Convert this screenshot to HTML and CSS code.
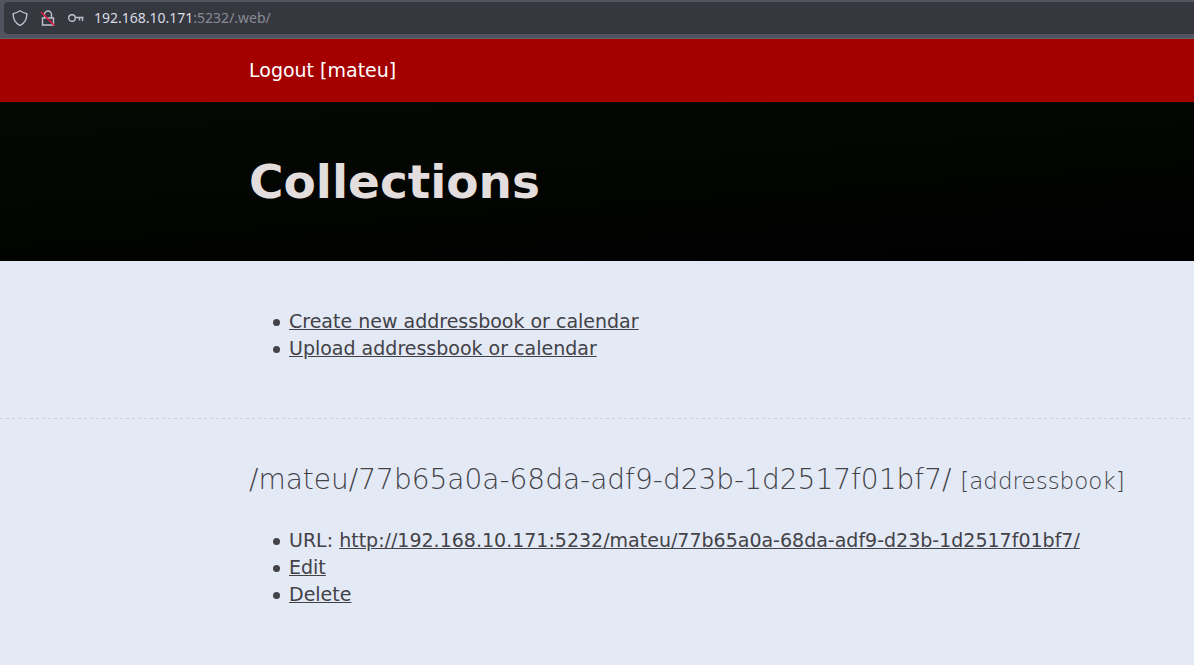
FILE: index.html
```html
<!DOCTYPE html>
<html lang="en">
<head>
<meta charset="utf-8">
<title>Collections</title>
<link rel="stylesheet" href="styles.css">
</head>
<body>
<div class="toolbar">
  <div class="address">
    <svg class="icon" viewBox="0 0 16 16" aria-hidden="true"><path d="M8 .8c2 1.400 4.200 2.300 6.800 2.800.200 5.700-1.800 9.200-6.800 12C3 12.800 1 9.300 1.200 3.600 3.800 3.100 6 2.200 8 .8z"/></svg>
    <svg class="icon" viewBox="0 0 16 16" aria-hidden="true"><path d="M4.500 8V4.500a3.500 3.500 0 0 1 7 0V8M2.500 8h11v7h-11z"/><path class="slash" d="M1 2l13.500 13.500"/></svg>
    <svg class="icon" viewBox="0 0 16 16" aria-hidden="true"><circle cx="4" cy="8" r="3.300"/><path d="M7.300 7.500h8.200M11.500 7.500v3M14.500 7.500v3.500"/></svg>
    <span class="address-text">192.168.10.171<span class="address-path">:5232/.web/</span></span>
  </div>
</div>
<nav class="nav"><a class="logout" href="#logout">Logout [mateu]</a></nav>
<header class="banner"><h1 class="title">Collections</h1></header>
<main>
  <section class="section section-actions">
    <ul class="list">
      <li><a class="link" href="#create">Create new addressbook or calendar</a></li>
      <li><a class="link" href="#upload">Upload addressbook or calendar</a></li>
    </ul>
  </section>
  <section class="section section-collection">
    <h2 class="collection">/mateu/77b65a0a-68da-adf9-d23b-1d2517f01bf7/ <small class="kind">[addressbook]</small></h2>
    <ul class="list">
      <li>URL: <a class="link" href="#collection">http://192.168.10.171:5232/mateu/77b65a0a-68da-adf9-d23b-1d2517f01bf7/</a></li>
      <li><a class="link" href="#edit">Edit</a></li>
      <li><a class="link" href="#delete">Delete</a></li>
    </ul>
  </section>
</main>
</body>
</html>
```

FILE: styles.css
```css
* {
  box-sizing: border-box;
}

body {
  margin: 0;
  background: #e4e9f6;
  color: #424247;
  font: 19px/27px "DejaVu Sans", sans-serif;
}

.toolbar {
  padding: 2px 0 4px 4px;
  background: #51535f;
  border-bottom: 1px solid #62636e;
}

.address {
  display: flex;
  align-items: center;
  gap: 12px;
  height: 32px;
  padding-left: 8px;
  background: #363840;
  border-radius: 4px 0 0 4px;
  color: #dadce4;
  font: 14px/20px "Noto Sans", sans-serif;
}

.icon {
  width: 16px;
  height: 16px;
  fill: none;
  stroke: #bfc1ca;
  stroke-width: 1.4;
}

.slash {
  stroke: #e01b46;
  stroke-width: 1.6;
}

.address-text {
  margin-left: -2px;
}

.address-path {
  color: #898b94;
}

.nav {
  padding: 18px 24px 18px 249px;
  background: #a40000;
}

.logout {
  color: #ffffff;
  text-decoration: none;
}

.banner {
  padding: 48px 24px 47px 249px;
  background: linear-gradient(176deg, #040902, #000000);
}

.title {
  margin: 0;
  color: #e4dddd;
  font-size: 47px;
  line-height: 64px;
}

.section {
  padding: 47px 24px 57px 249px;
}

.section-actions {
  background: repeating-linear-gradient(to right, #cfd0d4 0 3px, transparent 3px 6px) bottom / 100% 1px no-repeat;
}

.section-collection {
  padding-top: 40px;
}

.collection {
  margin: 0 0 25px;
  font-size: 28px;
  font-weight: 200;
  line-height: 41px;
}

.kind {
  font-size: 23px;
}

.list {
  margin: 0;
  padding-left: 40px;
  list-style: none;
}

.list li::before {
  content: "";
  display: inline-block;
  width: 7px;
  height: 7px;
  margin: 0 9px 0 -16px;
  border-radius: 50%;
  background: #424247;
  vertical-align: 2px;
}

.link {
  color: #424247;
}
```
